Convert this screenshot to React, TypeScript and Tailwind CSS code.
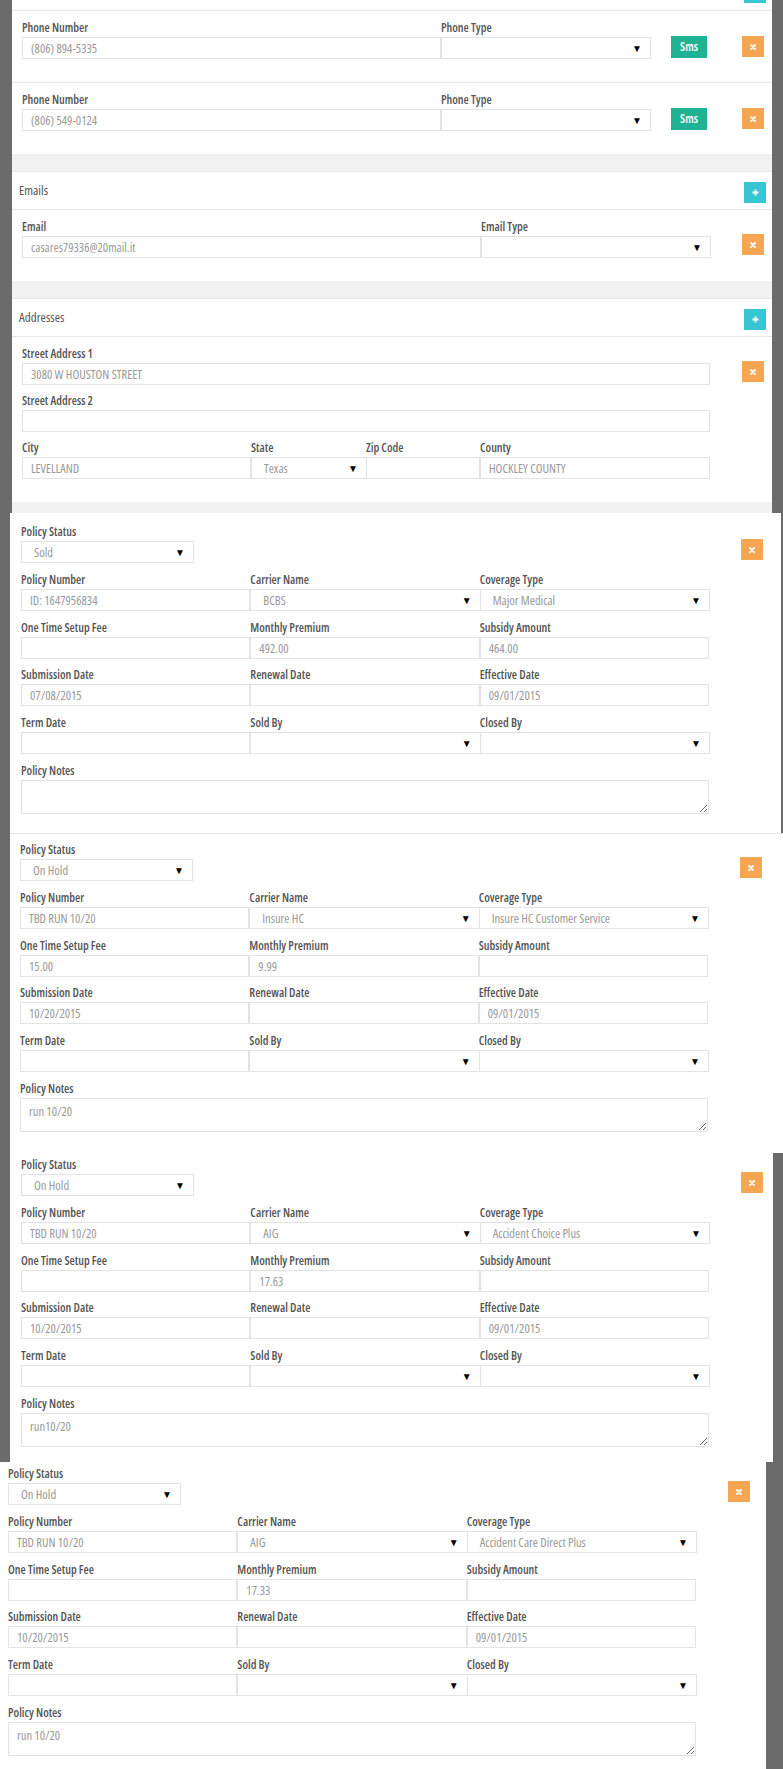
import React from "react";

type Policy = {
  status: string;
  number: string;
  carrier: string;
  coverage: string;
  setupFee: string;
  premium: string;
  subsidy: string;
  submission: string;
  renewal: string;
  effective: string;
  notes: string;
};

const policies: Policy[] = [
  {
    status: "Sold",
    number: "ID: 1647956834",
    carrier: "BCBS",
    coverage: "Major Medical",
    setupFee: "",
    premium: "492.00",
    subsidy: "464.00",
    submission: "07/08/2015",
    renewal: "",
    effective: "09/01/2015",
    notes: "",
  },
  {
    status: "On Hold",
    number: "TBD RUN 10/20",
    carrier: "Insure HC",
    coverage: "Insure HC Customer Service",
    setupFee: "15.00",
    premium: "9.99",
    subsidy: "",
    submission: "10/20/2015",
    renewal: "",
    effective: "09/01/2015",
    notes: "run 10/20",
  },
  {
    status: "On Hold",
    number: "TBD RUN 10/20",
    carrier: "AIG",
    coverage: "Accident Choice Plus",
    setupFee: "",
    premium: "17.63",
    subsidy: "",
    submission: "10/20/2015",
    renewal: "",
    effective: "09/01/2015",
    notes: "run10/20",
  },
  {
    status: "On Hold",
    number: "TBD RUN 10/20",
    carrier: "AIG",
    coverage: "Accident Care Direct Plus",
    setupFee: "",
    premium: "17.33",
    subsidy: "",
    submission: "10/20/2015",
    renewal: "",
    effective: "09/01/2015",
    notes: "run 10/20",
  },
];

// the screenshot is squeezed sideways, so the text runs narrow
const font = "font-['Open_Sans',sans-serif] font-stretch-[80%]";

function Label({ children }: { children: React.ReactNode }) {
  return (
    <div className="h-[19px] truncate text-[12px] leading-[19px] font-semibold text-[#555]">{children}</div>
  );
}

function Box({ value, select }: { value: string; select?: boolean }) {
  if (select) {
    return (
      <div className="-mr-px flex h-[22px] items-center justify-between border border-[#e3e3e3] bg-white pr-[8px] pl-[12px]">
        <span className="pt-[2px] text-[12.5px] text-[#999]">{value}</span>
        <span className="text-[10px] leading-none text-black">▼</span>
      </div>
    );
  }
  return (
    <input
      readOnly
      defaultValue={value}
      className="-mr-px block h-[22px] w-full border border-[#e3e3e3] bg-white px-[8px] text-[12.5px] text-[#999] outline-none"
    />
  );
}

function Field({
  label,
  value,
  select,
  className,
}: {
  label: string;
  value: string;
  select?: boolean;
  className?: string;
}) {
  return (
    <div className={className}>
      <Label>{label}</Label>
      <Box value={value} select={select} />
    </div>
  );
}

function RemoveBtn() {
  return (
    <button className="flex h-[21px] w-[22px] items-center justify-center bg-[#f6a553]">
      <svg width="6" height="6" viewBox="0 0 6 6">
        <path d="M1 1L5 5M5 1L1 5" stroke="white" strokeWidth="1.8" strokeLinecap="round" />
      </svg>
    </button>
  );
}

function AddBtn() {
  return (
    <button className="flex h-[21px] w-[22px] items-center justify-center bg-[#36c6d3]">
      <svg width="7" height="7" viewBox="0 0 7 7">
        <path d="M3.5 0.5V6.5M0.5 3.5H6.5" stroke="white" strokeWidth="1.8" />
      </svg>
    </button>
  );
}

function PolicyBlock({ p, pad }: { p: Policy; pad: string }) {
  return (
    <div className={`flex ${pad}`}>
      <div className="w-[688px]">
        <Field label="Policy Status" value={p.status} select className="mb-[7px] w-[172px]" />
        <div className="mb-[7px] grid grid-cols-3">
          <Field label="Policy Number" value={p.number} />
          <Field label="Carrier Name" value={p.carrier} select />
          <Field label="Coverage Type" value={p.coverage} select />
        </div>
        <div className="mb-[6px] grid grid-cols-3">
          <Field label="One Time Setup Fee" value={p.setupFee} />
          <Field label="Monthly Premium" value={p.premium} />
          <Field label="Subsidy Amount" value={p.subsidy} />
        </div>
        <div className="mb-[7px] grid grid-cols-3">
          <Field label="Submission Date" value={p.submission} />
          <Field label="Renewal Date" value={p.renewal} />
          <Field label="Effective Date" value={p.effective} />
        </div>
        <div className="mb-[7px] grid grid-cols-3">
          <Field label="Term Date" value="" />
          <Field label="Sold By" value="" select />
          <Field label="Closed By" value="" select />
        </div>
        <Label>Policy Notes</Label>
        <textarea
          readOnly
          defaultValue={p.notes}
          className="block h-[34px] w-full border border-[#e3e3e3] px-[8px] pt-[4px] text-[12.5px] text-[#999] outline-none"
        />
      </div>
      <div className="ml-[32px] pt-[17px]">
        <RemoveBtn />
      </div>
    </div>
  );
}

function PhoneRow({ phone, last }: { phone: string; last?: boolean }) {
  return (
    <div className={last ? "flex pt-[7px] pb-[23px] pl-[10px]" : "flex border-b border-[#e7e7e7] pt-[7px] pb-[23px] pl-[10px]"}>
      <Field label="Phone Number" value={phone} className="w-[419px]" />
      <Field label="Phone Type" value="" select className="w-[209px]" />
      <div className="ml-[21px] pt-[18px]">
        <button className="block h-[22px] w-[36px] bg-[#1fb394] text-[12px] font-semibold text-white">Sms</button>
      </div>
      <div className="ml-[35px] pt-[18px]">
        <RemoveBtn />
      </div>
    </div>
  );
}

function SectionHeader({ title }: { title: string }) {
  return (
    <div className="flex h-[39px] items-center justify-between border-y border-[#e7e7e7] pr-[6px] pl-[7px]">
      <span className="text-[13px] text-[#555]">{title}</span>
      <div className="pt-[3px]">
        <AddBtn />
      </div>
    </div>
  );
}

export default function App() {
  return (
    <div className={`w-[783px] bg-[#6b6b6b] ${font}`}>
      {/* contact details */}
      <div className="flex h-[513px] overflow-hidden">
        <div className="ml-[12px] flex w-[760px] flex-col bg-white">
          <div className="flex h-[11px] justify-end border-b border-[#e7e7e7] pr-[6px]">
            <div className="h-[3px] w-[22px] bg-[#36c6d3]" />
          </div>
          <PhoneRow phone="(806) 894-5335" />
          <PhoneRow phone="(806) 549-0124" last />
          <div className="h-[17px] bg-[#f1f1f1]" />

          <SectionHeader title="Emails" />
          <div className="flex pt-[7px] pb-[23px] pl-[10px]">
            <Field label="Email" value="casares79336@20mail.it" className="w-[459px]" />
            <Field label="Email Type" value="" select className="w-[229px]" />
            <div className="ml-[32px] pt-[17px]">
              <RemoveBtn />
            </div>
          </div>
          <div className="h-[17px] bg-[#f1f1f1]" />

          <SectionHeader title="Addresses" />
          <div className="flex pt-[7px] pl-[10px]">
            <div className="w-[688px]">
              <Field label="Street Address 1" value="3080 W HOUSTON STREET" className="mb-[6px]" />
              <Field label="Street Address 2" value="" className="mb-[6px]" />
              <div className="flex">
                <Field label="City" value="LEVELLAND" className="w-[229px]" />
                <Field label="State" value="Texas" select className="w-[115px]" />
                <Field label="Zip Code" value="" className="w-[114px]" />
                <Field label="County" value="HOCKLEY COUNTY" className="w-[230px]" />
              </div>
            </div>
            <div className="ml-[32px] pt-[17px]">
              <RemoveBtn />
            </div>
          </div>
          <div className="mt-[23px] flex-1 bg-[#f1f1f1]" />
        </div>
      </div>

      {/* policies */}
      <div className="flex h-[320px] overflow-hidden">
        <div className="ml-[10px] w-[771px] bg-white">
          <PolicyBlock p={policies[0]} pad="pt-[9px] pl-[11px]" />
        </div>
      </div>
      <div className="flex h-[320px] overflow-hidden">
        <div className="ml-[10px] flex-1 border-t border-[#e5e5e5] bg-white">
          <PolicyBlock p={policies[1]} pad="pt-[6px] pl-[10px]" />
        </div>
      </div>
      <div className="flex h-[309px] overflow-hidden">
        <div className="ml-[10px] w-[763px] bg-white">
          <PolicyBlock p={policies[2]} pad="pt-[2px] pl-[11px]" />
        </div>
      </div>
      <div className="flex h-[307px] overflow-hidden">
        <div className="w-[766px] bg-white">
          <PolicyBlock p={policies[3]} pad="pt-[2px] pl-[8px]" />
        </div>
      </div>
    </div>
  );
}
